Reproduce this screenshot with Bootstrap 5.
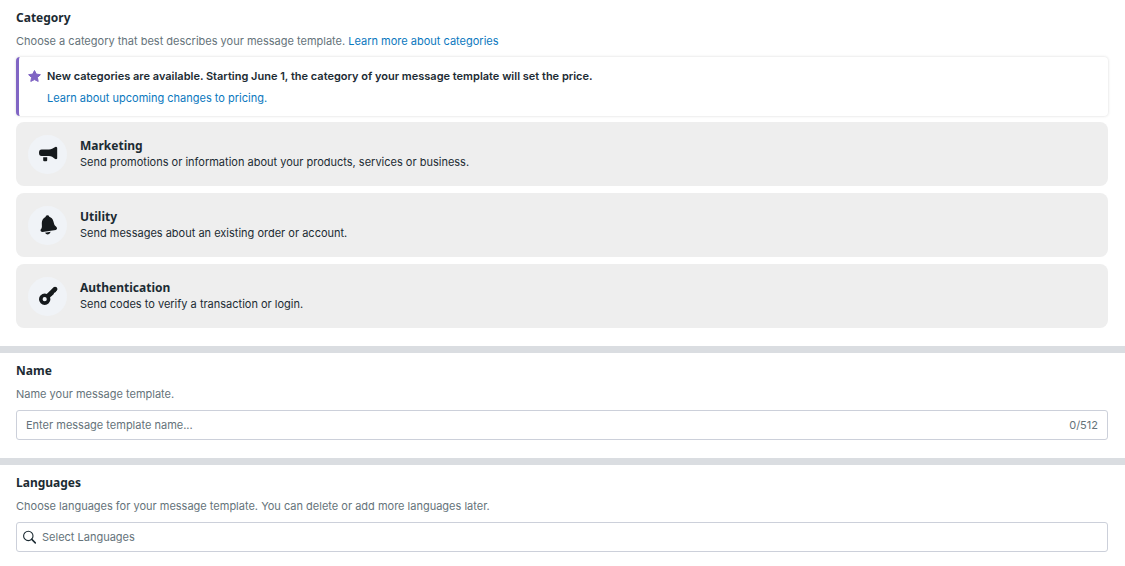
<!DOCTYPE html>
<html lang="en">
<head>
<meta charset="utf-8">
<meta name="viewport" content="width=device-width, initial-scale=1">
<title>New message template</title>
<link href="https://cdn.jsdelivr.net/npm/bootstrap@5.3.0/dist/css/bootstrap.min.css" rel="stylesheet">
<style>
  body { font-family: Inter, "Liberation Sans", sans-serif; font-size: 11px; line-height: 16px; color: #1c2b33; background: #fff; }
  a { color: #0a78be; text-decoration: none; }
  a:hover { text-decoration: underline; }
  .form-section { padding: 10px 17px 18px 16px; }
  .form-section + .form-section { border-top: 7px solid #dadde1; }
  .section-title { display: block; font-family: "Noto Sans", sans-serif; font-size: 12px; line-height: 16px; font-weight: 700; margin: 0 0 7px; }
  .section-help { color: #65737a; margin: 0 0 8px; }
  .notice { border-left: 3px solid #8065c4; border-radius: 4px; box-shadow: 0 0 3px rgba(0,0,0,.16); padding: 11px 8px 10px; margin-bottom: 6px; gap: 5px; }
  .notice-title { font-weight: 600; margin: 0 0 6px; }
  .choices { gap: 7px; }
  .choice { background: #eee; border: 0; border-radius: 8px; padding: 12px; gap: 13px; height: 64px; color: inherit; }
  .choice:hover { background: #e6e6e6; }
  .choice-icon { width: 39px; height: 39px; background: #f0f3f7; flex: none; color: #15191c; }
  .choice-title { font-family: "Noto Sans", sans-serif; font-size: 12px; line-height: 16px; font-weight: 700; }
  .choice-text { line-height: 16px; }
  .field { border: 1px solid #ccd0da; border-radius: 3px; height: 30px; padding: 0 9px; color: #65737a; }
  .field:focus-within { border-color: #0a78be; }
  .field input { font-size: 11px; line-height: 16px; min-height: 0; color: #1c2b33; }
  .field input:focus { box-shadow: none; }
  .field input::placeholder { color: #65737a; opacity: 1; }
  .search-field { padding-left: 6px; gap: 6px; }
</style>
</head>
<body>
<main>
  <section class="form-section">
    <h2 class="section-title">Category</h2>
    <p class="section-help">Choose a category that best describes your message template. <a href="#">Learn more about categories</a></p>
    <div class="notice d-flex align-items-start">
      <svg class="flex-shrink-0" width="15" height="16" viewBox="0 0 15 16" aria-hidden="true"><path fill="#8065c4" stroke="#8065c4" stroke-linejoin="round" d="M7.5 2.5 9.3 6.1 13.4 6.7 10.4 9.5 11.2 13.4 7.5 11.6 3.8 13.4 4.6 9.5 1.6 6.7 5.7 6.1Z"/></svg>
      <div>
        <p class="notice-title">New categories are available. Starting June 1, the category of your message template will set the price.</p>
        <a href="#">Learn about upcoming changes to pricing.</a>
      </div>
    </div>
    <div class="choices d-flex flex-column">
      <button type="button" class="choice d-flex align-items-center text-start w-100">
        <span class="choice-icon rounded-circle d-flex align-items-center justify-content-center">
          <svg width="20" height="20" viewBox="0 0 20 20" fill="currentColor" aria-hidden="true"><path d="M3.600 5.600H11c2.400 0 4-1.200 5.800-2.300Q17.700 2.500 18.600 3q.6.3.6 1V14q0 .8-.6 1.100-.9.400-1.800-.3C15 13.400 13.400 12 11 12H3.600Q1 12 1 8.800T3.600 5.600ZM5.200 13.200h4v3q0 1-1 1h-2q-1 0-1-1Z"/></svg>
        </span>
        <span>
          <span class="choice-title d-block">Marketing</span>
          <span class="choice-text d-block">Send promotions or information about your products, services or business.</span>
        </span>
      </button>
      <button type="button" class="choice d-flex align-items-center text-start w-100">
        <span class="choice-icon rounded-circle d-flex align-items-center justify-content-center">
          <svg width="20" height="20" viewBox="0 0 20 20" fill="currentColor" aria-hidden="true"><path d="M7.500 2Q7.600.3 9.300.3T11.300 1.700C13.300 2.400 14.700 3.600 15.300 6L16.300 9.500Q16.600 10.500 18 11.600 20.200 14 17.800 15L4.500 17Q1.900 17 2.700 14.600 4 12.900 3.900 11.500L3.800 8C3.900 5 5.300 3 7.500 2ZM7 17.700 12.700 16.800Q12.100 19.200 10 19.400 8 19.500 7 17.700Z"/></svg>
        </span>
        <span>
          <span class="choice-title d-block">Utility</span>
          <span class="choice-text d-block">Send messages about an existing order or account.</span>
        </span>
      </button>
      <button type="button" class="choice d-flex align-items-center text-start w-100">
        <span class="choice-icon rounded-circle d-flex align-items-center justify-content-center">
          <svg width="20" height="20" viewBox="0 0 20 20" aria-hidden="true"><circle cx="6.700" cy="13.200" r="3.900" fill="none" stroke="currentColor" stroke-width="3.600"/><path d="M10 9.800 17 3" fill="none" stroke="currentColor" stroke-width="4.400" stroke-linecap="round"/><path d="M13.500 4 16 1.200Q19.600.6 19.200 3.800L17.500 6.300 16 6.600 15.600 8.300 12 11.500Z" fill="currentColor"/></svg>
        </span>
        <span>
          <span class="choice-title d-block">Authentication</span>
          <span class="choice-text d-block">Send codes to verify a transaction or login.</span>
        </span>
      </button>
    </div>
  </section>

  <section class="form-section">
    <label class="section-title" for="template-name">Name</label>
    <p class="section-help" id="name-help">Name your message template.</p>
    <div class="field d-flex align-items-center">
      <input id="template-name" type="text" class="form-control border-0 p-0 bg-transparent" maxlength="512" placeholder="Enter message template name..." aria-describedby="name-help">
      <span>0/512</span>
    </div>
  </section>

  <section class="form-section">
    <label class="section-title" for="languages">Languages</label>
    <p class="section-help" id="languages-help">Choose languages for your message template. You can delete or add more languages later.</p>
    <div class="field search-field d-flex align-items-center">
      <svg class="flex-shrink-0" width="13" height="14" viewBox="0 0 13 14" fill="none" stroke="#1c2b33" stroke-width="1.100" stroke-linecap="round" aria-hidden="true"><circle cx="5.300" cy="5.900" r="4.700"/><path d="m8.800 9.400 3.500 3.500" stroke-width="1.500"/></svg>
      <input id="languages" type="text" class="form-control border-0 p-0 bg-transparent" placeholder="Select Languages" aria-describedby="languages-help">
    </div>
  </section>
</main>
<script src="https://cdn.jsdelivr.net/npm/bootstrap@5.3.0/dist/js/bootstrap.bundle.min.js"></script>
</body>
</html>
